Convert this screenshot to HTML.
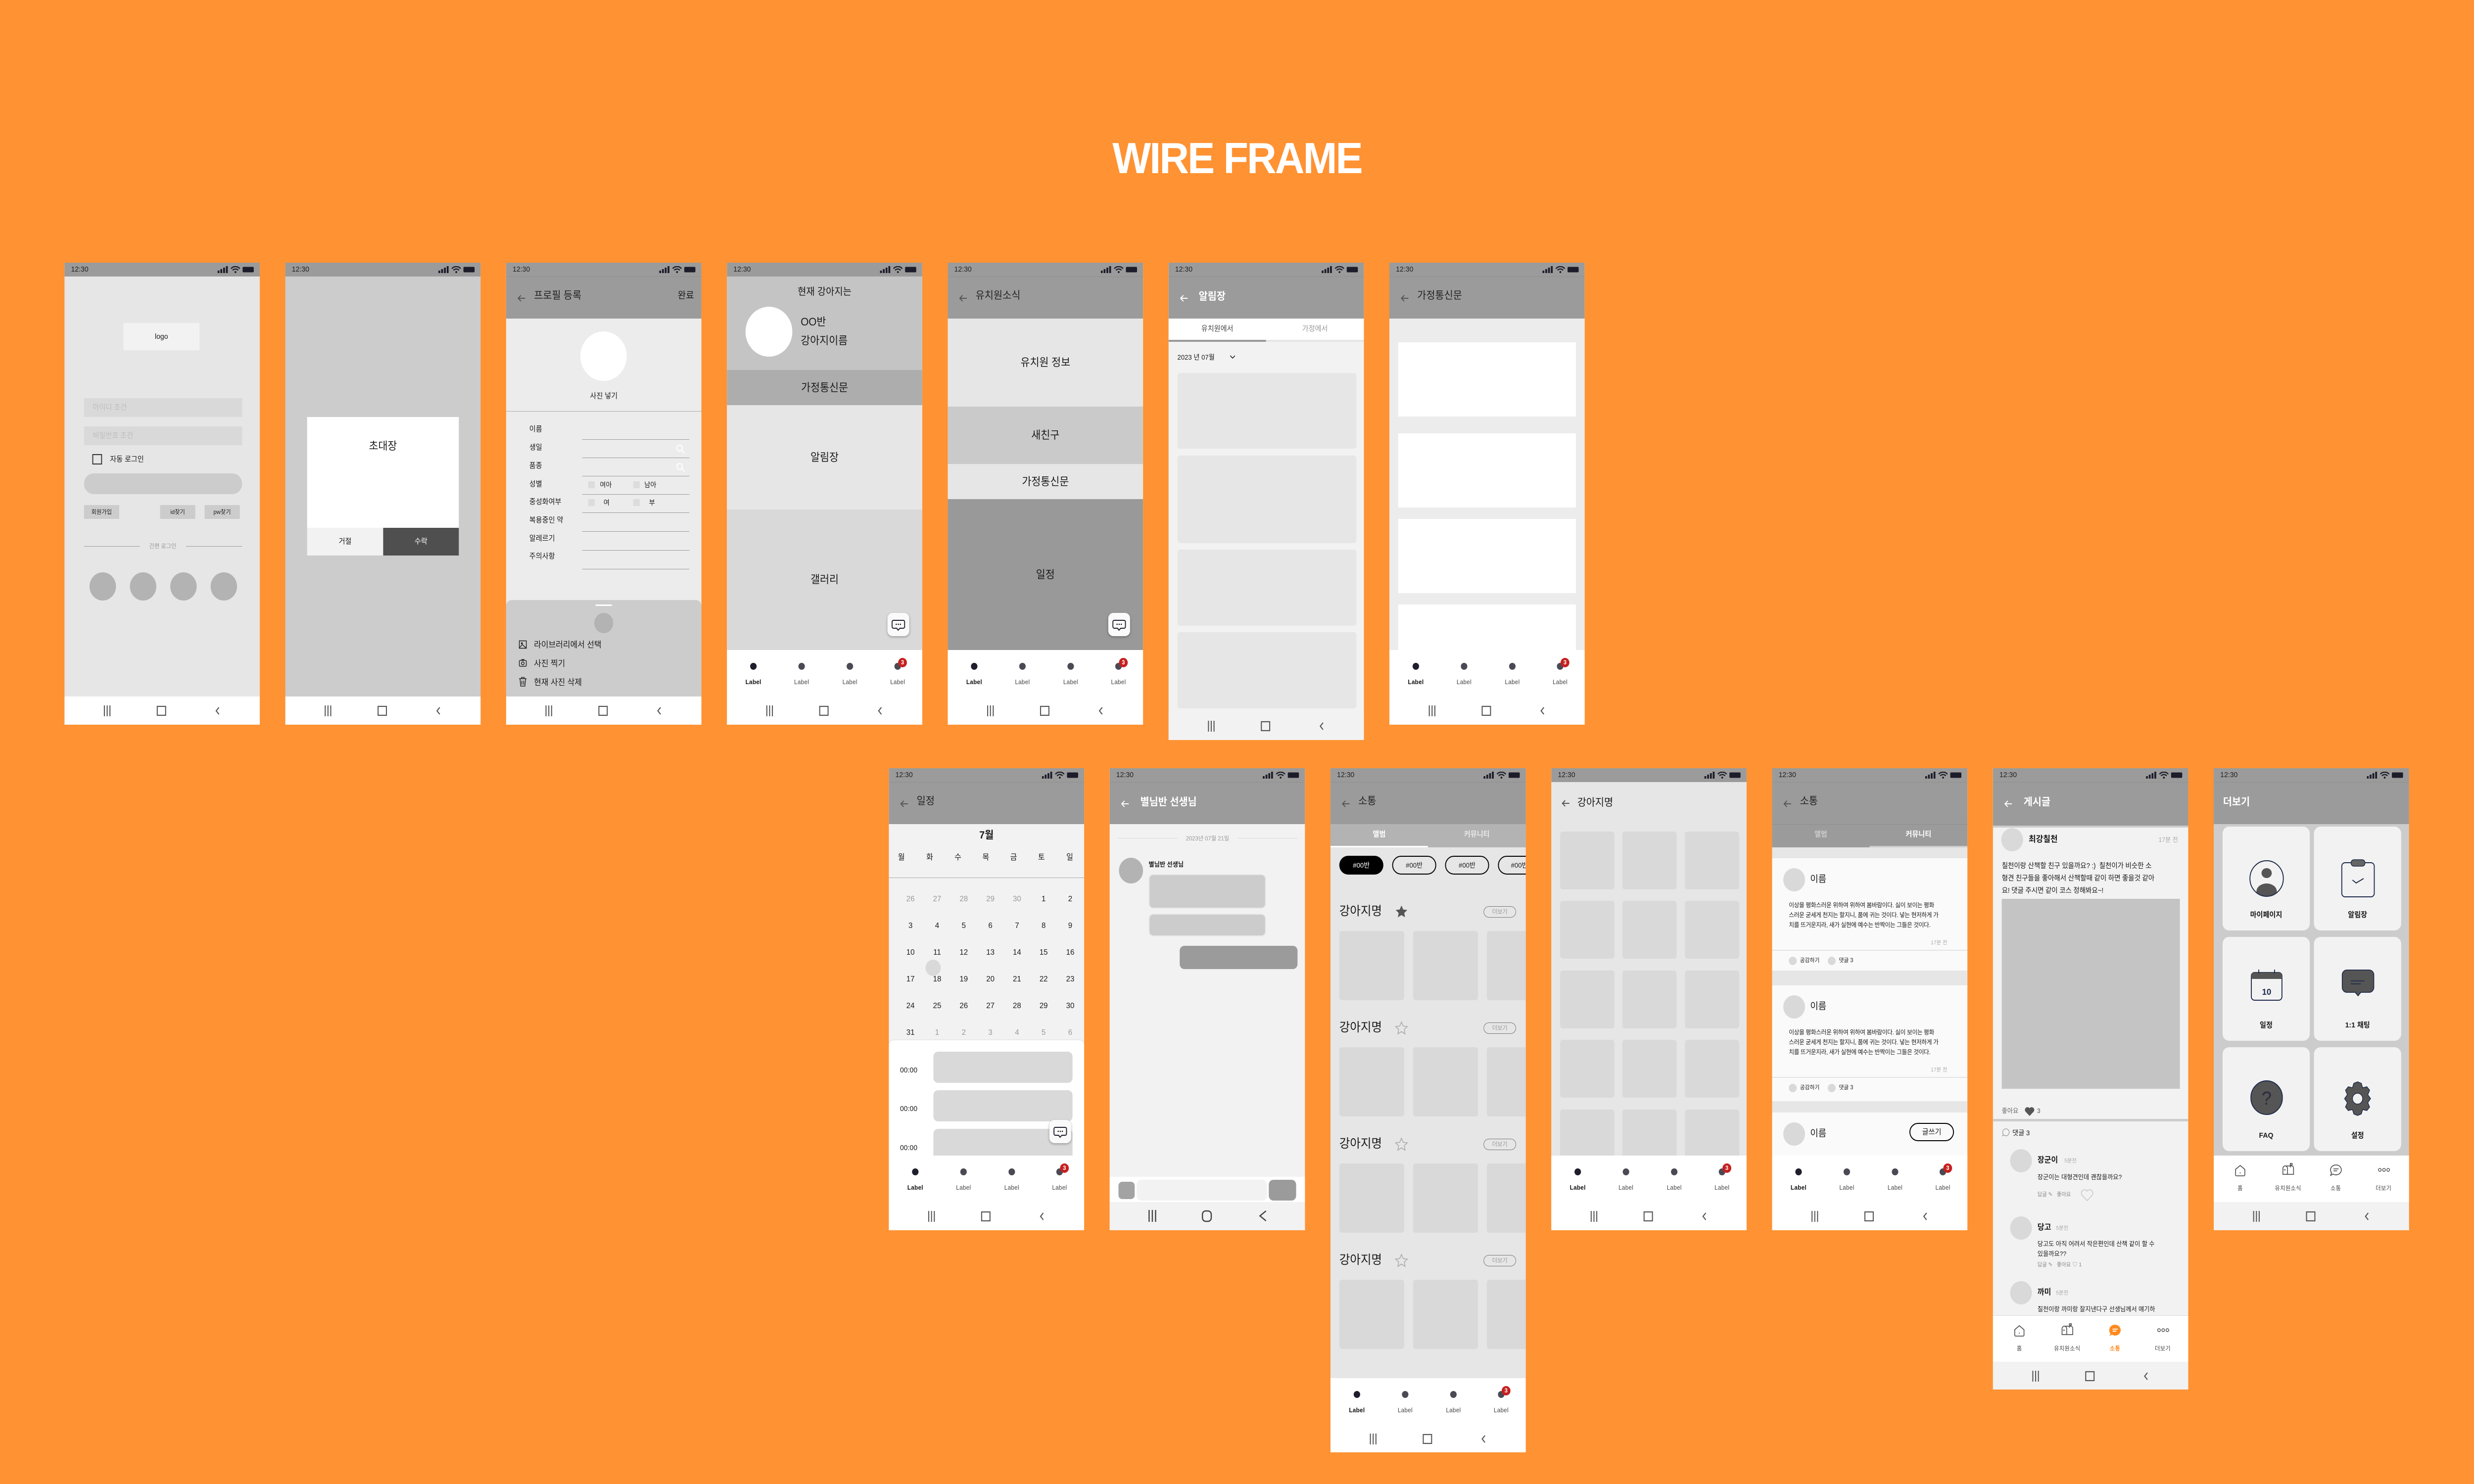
<!DOCTYPE html>
<html><head><meta charset="utf-8">
<style>
*{margin:0;padding:0;box-sizing:border-box}
html,body{width:100%;height:100%;overflow:hidden;background:#FF9233}
#root{position:absolute;left:0;top:0;width:5333px;height:3000px;background:#FF9233;transform-origin:0 0;font-family:"Liberation Sans","Noto Sans CJK KR",sans-serif;color:#1a1a1a;overflow:hidden}
.a{position:absolute}
.t{position:absolute;white-space:nowrap}
.ph{position:absolute;width:421px;height:934px;overflow:hidden;background:#e6e6e6}
.sb{position:absolute;left:0;top:0;width:421px;height:28px;background:#9b9b9b}
.sb .tm{position:absolute;left:14px;top:0;line-height:28px;font-size:15px;color:#222}
.sb svg{position:absolute;left:330px;top:7px}
.ab{position:absolute;left:0;top:28px;width:421px;height:85px;background:#9b9b9b;border-top:1px solid #8f8f8f}
.ab .bk{position:absolute;left:22px;top:33px}
.ab .ti{position:absolute;left:60px;top:22px;font-size:21px;line-height:40px;color:#222}
.nav{position:absolute;left:0;bottom:0;width:421px;height:57px;background:#fff}
.tb{position:absolute;left:0;top:783px;width:421px;height:94px;background:#fff}
.tb .d{position:absolute;top:26px;width:14px;height:14px;border-radius:50%;background:#4a4a55}
.tb .l{position:absolute;top:58px;width:80px;margin-left:-40px;text-align:center;font-size:12.5px;color:#444;letter-spacing:.3px}
.bd{position:absolute;width:19px;height:19px;border-radius:50%;background:#c62020;color:#fff;font-size:12px;line-height:19px;text-align:center;font-weight:bold}
.c{text-align:center}
.fab{position:absolute;width:47px;height:47px;border-radius:11px;background:#fafafa;box-shadow:0 2px 5px rgba(0,0,0,.3)}
</style></head><body>
<div id="root">

<div class="t" style="left:0;width:5333px;top:270px;text-align:center;font-size:88px;font-weight:bold;color:#fff;letter-spacing:-3px;line-height:100px">WIRE FRAME</div>

<!-- 1 login -->
<div class="ph" style="left:139px;top:531px;background:#e6e6e6">
 <div class="sb"><div class="tm">12:30</div><svg width="82" height="14" viewBox="0 0 82 14" fill="#1c1c2a"><rect x="0" y="9" width="4" height="5"/><rect x="6" y="6" width="4" height="8"/><rect x="12" y="3" width="4" height="11"/><rect x="18" y="0" width="4" height="14"/><path d="M29 5a13 13 0 0 1 19 0M32.5 8.5a8 8 0 0 1 12 0" stroke="#1c1c2a" stroke-width="2.4" fill="none"/><circle cx="38.5" cy="12" r="2"/><rect x="54" y="1.5" width="24" height="11" rx="2"/></svg></div>
 <div class="a c" style="left:127px;top:122px;width:164px;height:55px;background:#f2f2f2;line-height:55px;font-size:15px">logo</div>
 <div class="a" style="left:42px;top:274px;width:341px;height:38px;background:#d9d9d9"></div>
 <div class="t" style="left:61px;top:274px;line-height:38px;font-size:15px;color:#bdbdbd">아이디 조건</div>
 <div class="a" style="left:42px;top:331px;width:341px;height:38px;background:#d9d9d9"></div>
 <div class="t" style="left:61px;top:331px;line-height:38px;font-size:15px;color:#bdbdbd">비밀번호 조건</div>
 <div class="a" style="left:60px;top:387px;width:21px;height:21px;border:2px solid #333"></div>
 <div class="t" style="left:98px;top:386px;line-height:24px;font-size:15px">자동 로그인</div>
 <div class="a" style="left:42px;top:426px;width:341px;height:42px;border-radius:21px;background:#cccccc"></div>
 <div class="a c" style="left:42px;top:490px;width:76px;height:28px;background:#cccccc;line-height:28px;font-size:12px">회원가입</div>
 <div class="a c" style="left:206px;top:490px;width:76px;height:28px;background:#cccccc;line-height:28px;font-size:12px">id찾기</div>
 <div class="a c" style="left:302px;top:490px;width:76px;height:28px;background:#cccccc;line-height:28px;font-size:12px">pw찾기</div>
 <div class="a" style="left:42px;top:573px;width:120px;height:1px;background:#999"></div>
 <div class="a" style="left:262px;top:573px;width:121px;height:1px;background:#999"></div>
 <div class="t c" style="left:162px;width:100px;top:564px;font-size:12px;line-height:18px;color:#999">간편 로그인</div>
 <div class="a" style="left:54px;top:626px;width:57px;height:57px;border-radius:50%;background:#b3b3b3"></div>
 <div class="a" style="left:141px;top:626px;width:57px;height:57px;border-radius:50%;background:#b3b3b3"></div>
 <div class="a" style="left:228px;top:626px;width:57px;height:57px;border-radius:50%;background:#b3b3b3"></div>
 <div class="a" style="left:315px;top:626px;width:57px;height:57px;border-radius:50%;background:#b3b3b3"></div>
 <div class="nav"><svg width="421" height="57"><g stroke="#555" stroke-width="2.2" fill="none"><path d="M86 18v22M92 18v22M98 18v22"/><rect x="200" y="20" width="18" height="18"/><path d="M333 22l-6 7 6 7"/></g></svg></div>
</div>

<!-- 2 invite -->
<div class="ph" style="left:615px;top:531px;background:#cccccc">
 <div class="sb"><div class="tm">12:30</div><svg width="82" height="14" viewBox="0 0 82 14" fill="#1c1c2a"><rect x="0" y="9" width="4" height="5"/><rect x="6" y="6" width="4" height="8"/><rect x="12" y="3" width="4" height="11"/><rect x="18" y="0" width="4" height="14"/><path d="M29 5a13 13 0 0 1 19 0M32.5 8.5a8 8 0 0 1 12 0" stroke="#1c1c2a" stroke-width="2.4" fill="none"/><circle cx="38.5" cy="12" r="2"/><rect x="54" y="1.5" width="24" height="11" rx="2"/></svg></div>
 <div class="a" style="left:47px;top:312px;width:327px;height:224px;background:#fff"></div>
 <div class="t c" style="left:47px;width:327px;top:356px;font-size:22px;line-height:30px">초대장</div>
 <div class="a c" style="left:47px;top:536px;width:164px;height:56px;background:#f2f2f2;line-height:56px;font-size:15px">거절</div>
 <div class="a c" style="left:211px;top:536px;width:163px;height:56px;background:#4f4f4f;line-height:56px;font-size:15px;color:#fff">수락</div>
 <div class="nav"><svg width="421" height="57"><g stroke="#555" stroke-width="2.2" fill="none"><path d="M86 18v22M92 18v22M98 18v22"/><rect x="200" y="20" width="18" height="18"/><path d="M333 22l-6 7 6 7"/></g></svg></div>
</div>

<!-- 3 profile -->
<div class="ph" style="left:1091px;top:531px;background:#ececec">
 <div class="sb"><div class="tm">12:30</div><svg width="82" height="14" viewBox="0 0 82 14" fill="#1c1c2a"><rect x="0" y="9" width="4" height="5"/><rect x="6" y="6" width="4" height="8"/><rect x="12" y="3" width="4" height="11"/><rect x="18" y="0" width="4" height="14"/><path d="M29 5a13 13 0 0 1 19 0M32.5 8.5a8 8 0 0 1 12 0" stroke="#1c1c2a" stroke-width="2.4" fill="none"/><circle cx="38.5" cy="12" r="2"/><rect x="54" y="1.5" width="24" height="11" rx="2"/></svg></div>
 <div class="ab"><svg class="bk" width="22" height="20"><path d="M19 10H4M10 4l-6 6 6 6" stroke="#555" stroke-width="2" fill="none"/></svg><div class="ti" style="top:18px">프로필 등록</div><div class="t" style="right:16px;top:18px;font-size:19px;line-height:40px">완료</div></div>
 <div class="a" style="left:160px;top:139px;width:100px;height:100px;border-radius:50%;background:#fff"></div>
 <div class="t c" style="left:0;width:421px;top:259px;font-size:15px;line-height:22px">사진 넣기</div>
 <div class="a" style="left:0;top:300px;width:421px;height:1px;background:#aaa"></div>
 <div class="t" style="left:50px;top:327px;font-size:15px;line-height:20px">이름</div>
 <div class="t" style="left:50px;top:364px;font-size:15px;line-height:20px">생일</div>
 <div class="t" style="left:50px;top:401px;font-size:15px;line-height:20px">품종</div>
 <div class="t" style="left:50px;top:438px;font-size:15px;line-height:20px">성별</div>
 <div class="t" style="left:50px;top:474px;font-size:15px;line-height:20px">중성화여부</div>
 <div class="t" style="left:50px;top:511px;font-size:15px;line-height:20px">복용중인 약</div>
 <div class="t" style="left:50px;top:548px;font-size:15px;line-height:20px">알레르기</div>
 <div class="t" style="left:50px;top:584px;font-size:15px;line-height:20px">주의사항</div>
 <div class="a" style="left:164px;top:357px;width:231px;height:1px;background:#999"></div>
 <div class="a" style="left:164px;top:394px;width:231px;height:1px;background:#999"></div>
 <div class="a" style="left:164px;top:431px;width:231px;height:1px;background:#999"></div>
 <div class="a" style="left:164px;top:468px;width:231px;height:1px;background:#999"></div>
 <div class="a" style="left:164px;top:505px;width:231px;height:1px;background:#999"></div>
 <div class="a" style="left:164px;top:543px;width:231px;height:1px;background:#999"></div>
 <div class="a" style="left:164px;top:581px;width:231px;height:1px;background:#999"></div>
 <div class="a" style="left:164px;top:619px;width:231px;height:1px;background:#999"></div>
 <svg class="a" style="left:366px;top:367px" width="20" height="20"><circle cx="8" cy="8" r="6" stroke="#fff" stroke-width="2" fill="none"/><path d="M12.5 12.5l6 6" stroke="#fff" stroke-width="2"/></svg>
 <svg class="a" style="left:366px;top:404px" width="20" height="20"><circle cx="8" cy="8" r="6" stroke="#fff" stroke-width="2" fill="none"/><path d="M12.5 12.5l6 6" stroke="#fff" stroke-width="2"/></svg>
 <div class="a" style="left:177px;top:442px;width:14px;height:14px;background:#dcdcdc"></div>
 <div class="t" style="left:202px;top:439px;font-size:14px;line-height:20px">여아</div>
 <div class="a" style="left:274px;top:442px;width:14px;height:14px;background:#dcdcdc"></div>
 <div class="t" style="left:298px;top:439px;font-size:14px;line-height:20px">남아</div>
 <div class="a" style="left:177px;top:478px;width:14px;height:14px;background:#dcdcdc"></div>
 <div class="t" style="left:210px;top:475px;font-size:14px;line-height:20px">여</div>
 <div class="a" style="left:274px;top:478px;width:14px;height:14px;background:#dcdcdc"></div>
 <div class="t" style="left:308px;top:475px;font-size:14px;line-height:20px">부</div>
 <div class="a" style="left:0;top:682px;width:421px;height:200px;background:#cccccc;border-radius:12px 12px 0 0"></div>
 <div class="a" style="left:193px;top:691px;width:35px;height:3px;background:#fff"></div>
 <div class="a" style="left:190px;top:708px;width:41px;height:41px;border-radius:50%;background:#b3b3b3"></div>
 <svg class="a" style="left:27px;top:763px" width="18" height="18"><rect x="1.5" y="1.5" width="15" height="15" stroke="#222" stroke-width="1.6" fill="none"/><circle cx="7" cy="6.5" r="2" fill="#222"/><path d="M2 15l6-6 8 7" stroke="#222" stroke-width="1.5" fill="none"/></svg>
 <div class="t" style="left:60px;top:761px;font-size:17px;line-height:24px">라이브러리에서 선택</div>
 <svg class="a" style="left:27px;top:800px" width="18" height="18"><rect x="1.5" y="4" width="15" height="12" rx="2" stroke="#222" stroke-width="1.6" fill="none"/><rect x="6" y="1.5" width="6" height="3" fill="#222"/><circle cx="9" cy="10" r="3" stroke="#222" stroke-width="1.6" fill="none"/></svg>
 <div class="t" style="left:60px;top:799px;font-size:17px;line-height:24px">사진 찍기</div>
 <svg class="a" style="left:27px;top:837px" width="18" height="20"><path d="M1 4h16M6 4V1.5h6V4M3 4l1.5 15h9L15 4M7 8v8M11 8v8" stroke="#222" stroke-width="1.6" fill="none"/></svg>
 <div class="t" style="left:60px;top:837px;font-size:17px;line-height:24px">현재 사진 삭제</div>
 <div class="nav"><svg width="421" height="57"><g stroke="#555" stroke-width="2.2" fill="none"><path d="M86 18v22M92 18v22M98 18v22"/><rect x="200" y="20" width="18" height="18"/><path d="M333 22l-6 7 6 7"/></g></svg></div>
</div>

<!-- 4 home -->
<div class="ph" style="left:1567px;top:531px">
 <div class="sb"><div class="tm">12:30</div><svg width="82" height="14" viewBox="0 0 82 14" fill="#1c1c2a"><rect x="0" y="9" width="4" height="5"/><rect x="6" y="6" width="4" height="8"/><rect x="12" y="3" width="4" height="11"/><rect x="18" y="0" width="4" height="14"/><path d="M29 5a13 13 0 0 1 19 0M32.5 8.5a8 8 0 0 1 12 0" stroke="#1c1c2a" stroke-width="2.4" fill="none"/><circle cx="38.5" cy="12" r="2"/><rect x="54" y="1.5" width="24" height="11" rx="2"/></svg></div>
 <div class="a" style="left:0;top:28px;width:421px;height:189px;background:#c4c4c4"></div>
 <div class="t c" style="left:0;width:421px;top:44px;font-size:20px;line-height:30px">현재 강아지는</div>
 <div class="a" style="left:40px;top:89px;width:101px;height:101px;border-radius:50%;background:#fff"></div>
 <div class="t" style="left:159px;top:105px;font-size:22px;line-height:30px">OO반</div>
 <div class="t" style="left:159px;top:143px;font-size:22px;line-height:30px">강아지이름</div>
 <div class="a c" style="left:0;top:217px;width:421px;height:71px;background:#adadad;line-height:71px;font-size:22px">가정통신문</div>
 <div class="a c" style="left:0;top:288px;width:421px;height:211px;background:#e6e6e6;line-height:211px;font-size:22px">알림장</div>
 <div class="a c" style="left:0;top:499px;width:421px;height:284px;background:#d9d9d9;line-height:284px;font-size:22px">갤러리</div>
 <div class="fab" style="left:346px;top:708px"><svg width="47" height="47"><path d="M13 15h21a3 3 0 0 1 3 3v10a3 3 0 0 1-3 3h-7l-4 4-3-4h-7a3 3 0 0 1-3-3V18a3 3 0 0 1 3-3z" stroke="#1e1e2d" stroke-width="2" fill="none"/><circle cx="19" cy="23" r="1.3"/><circle cx="23.5" cy="23" r="1.3"/><circle cx="28" cy="23" r="1.3"/></svg></div>
 <div class="tb"><div class="d" style="left:50px;background:#1e1e2d"></div><div class="d" style="left:154px"></div><div class="d" style="left:258px"></div><div class="d" style="left:361px"></div><div class="bd" style="left:369px;top:16px">3</div><div class="l" style="left:57px;font-weight:bold;color:#111">Label</div><div class="l" style="left:161px">Label</div><div class="l" style="left:265px">Label</div><div class="l" style="left:368px">Label</div></div>
 <div class="nav"><svg width="421" height="57"><g stroke="#555" stroke-width="2.2" fill="none"><path d="M86 18v22M92 18v22M98 18v22"/><rect x="200" y="20" width="18" height="18"/><path d="M333 22l-6 7 6 7"/></g></svg></div>
</div>

<!-- 5 유치원소식 -->
<div class="ph" style="left:2043px;top:531px">
 <div class="sb"><div class="tm">12:30</div><svg width="82" height="14" viewBox="0 0 82 14" fill="#1c1c2a"><rect x="0" y="9" width="4" height="5"/><rect x="6" y="6" width="4" height="8"/><rect x="12" y="3" width="4" height="11"/><rect x="18" y="0" width="4" height="14"/><path d="M29 5a13 13 0 0 1 19 0M32.5 8.5a8 8 0 0 1 12 0" stroke="#1c1c2a" stroke-width="2.4" fill="none"/><circle cx="38.5" cy="12" r="2"/><rect x="54" y="1.5" width="24" height="11" rx="2"/></svg></div>
 <div class="ab"><svg class="bk" width="22" height="20"><path d="M19 10H4M10 4l-6 6 6 6" stroke="#555" stroke-width="2" fill="none"/></svg><div class="ti" style="top:18px">유치원소식</div></div>
 <div class="a c" style="left:0;top:113px;width:421px;height:178px;background:#e6e6e6;line-height:178px;font-size:22px">유치원 정보</div>
 <div class="a c" style="left:0;top:291px;width:421px;height:116px;background:#cacaca;line-height:116px;font-size:22px">새친구</div>
 <div class="a c" style="left:0;top:407px;width:421px;height:71px;background:#e6e6e6;line-height:71px;font-size:22px">가정통신문</div>
 <div class="a c" style="left:0;top:478px;width:421px;height:305px;background:#999;line-height:305px;font-size:22px">일정</div>
 <div class="fab" style="left:346px;top:708px"><svg width="47" height="47"><path d="M13 15h21a3 3 0 0 1 3 3v10a3 3 0 0 1-3 3h-7l-4 4-3-4h-7a3 3 0 0 1-3-3V18a3 3 0 0 1 3-3z" stroke="#1e1e2d" stroke-width="2" fill="none"/><circle cx="19" cy="23" r="1.3"/><circle cx="23.5" cy="23" r="1.3"/><circle cx="28" cy="23" r="1.3"/></svg></div>
 <div class="tb"><div class="d" style="left:50px;background:#1e1e2d"></div><div class="d" style="left:154px"></div><div class="d" style="left:258px"></div><div class="d" style="left:361px"></div><div class="bd" style="left:369px;top:16px">3</div><div class="l" style="left:57px;font-weight:bold;color:#111">Label</div><div class="l" style="left:161px">Label</div><div class="l" style="left:265px">Label</div><div class="l" style="left:368px">Label</div></div>
 <div class="nav"><svg width="421" height="57"><g stroke="#555" stroke-width="2.2" fill="none"><path d="M86 18v22M92 18v22M98 18v22"/><rect x="200" y="20" width="18" height="18"/><path d="M333 22l-6 7 6 7"/></g></svg></div>
</div>

<!-- 6 알림장 -->
<div class="ph" style="left:2519px;top:531px;height:965px;background:#f2f2f2">
 <div class="sb"><div class="tm">12:30</div><svg width="82" height="14" viewBox="0 0 82 14" fill="#1c1c2a"><rect x="0" y="9" width="4" height="5"/><rect x="6" y="6" width="4" height="8"/><rect x="12" y="3" width="4" height="11"/><rect x="18" y="0" width="4" height="14"/><path d="M29 5a13 13 0 0 1 19 0M32.5 8.5a8 8 0 0 1 12 0" stroke="#1c1c2a" stroke-width="2.4" fill="none"/><circle cx="38.5" cy="12" r="2"/><rect x="54" y="1.5" width="24" height="11" rx="2"/></svg></div>
 <div class="ab"><svg class="bk" width="22" height="20"><path d="M19 10H4M10 4l-6 6 6 6" stroke="#fff" stroke-width="2" fill="none"/></svg><div class="ti" style="left:65px;top:20px;color:#fff;font-weight:bold">알림장</div></div>
 <div class="a" style="left:0;top:113px;width:421px;height:47px;background:#fff"></div>
 <div class="t c" style="left:0;width:210px;top:123px;font-size:15px;line-height:22px;color:#444">유치원에서</div>
 <div class="t c" style="left:210px;width:211px;top:123px;font-size:15px;line-height:22px;color:#999">가정에서</div>
 <div class="a" style="left:0;top:156px;width:421px;height:4px;background:#e6e6e6"></div>
 <div class="a" style="left:0;top:156px;width:210px;height:4px;background:#999"></div>
 <div class="t" style="left:19px;top:181px;font-size:14px;line-height:20px">2023 년 07월</div>
 <svg class="a" style="left:131px;top:186px" width="14" height="10"><path d="M2 2l5 5 5-5" stroke="#222" stroke-width="1.6" fill="none"/></svg>
 <div class="a" style="left:19px;top:223px;width:386px;height:153px;background:#e6e6e6;border-radius:6px"></div>
 <div class="a" style="left:19px;top:390px;width:386px;height:177px;background:#e6e6e6;border-radius:6px"></div>
 <div class="a" style="left:19px;top:580px;width:386px;height:154px;background:#e6e6e6;border-radius:6px"></div>
 <div class="a" style="left:19px;top:747px;width:386px;height:154px;background:#e6e6e6;border-radius:6px"></div>
 <div class="nav" style="background:#f2f2f2"><svg width="421" height="57"><g stroke="#555" stroke-width="2.2" fill="none"><path d="M86 18v22M92 18v22M98 18v22"/><rect x="200" y="20" width="18" height="18"/><path d="M333 22l-6 7 6 7"/></g></svg></div>
</div>

<!-- 7 가정통신문 -->
<div class="ph" style="left:2995px;top:531px;background:#ececec">
 <div class="sb"><div class="tm">12:30</div><svg width="82" height="14" viewBox="0 0 82 14" fill="#1c1c2a"><rect x="0" y="9" width="4" height="5"/><rect x="6" y="6" width="4" height="8"/><rect x="12" y="3" width="4" height="11"/><rect x="18" y="0" width="4" height="14"/><path d="M29 5a13 13 0 0 1 19 0M32.5 8.5a8 8 0 0 1 12 0" stroke="#1c1c2a" stroke-width="2.4" fill="none"/><circle cx="38.5" cy="12" r="2"/><rect x="54" y="1.5" width="24" height="11" rx="2"/></svg></div>
 <div class="ab"><svg class="bk" width="22" height="20"><path d="M19 10H4M10 4l-6 6 6 6" stroke="#555" stroke-width="2" fill="none"/></svg><div class="ti" style="top:18px">가정통신문</div></div>
 <div class="a" style="left:19px;top:161px;width:383px;height:150px;background:#fff"></div>
 <div class="a" style="left:19px;top:345px;width:383px;height:150px;background:#fff"></div>
 <div class="a" style="left:19px;top:518px;width:383px;height:150px;background:#fff"></div>
 <div class="a" style="left:19px;top:691px;width:383px;height:150px;background:#fff"></div>
 <div class="tb"><div class="d" style="left:50px;background:#1e1e2d"></div><div class="d" style="left:154px"></div><div class="d" style="left:258px"></div><div class="d" style="left:361px"></div><div class="bd" style="left:369px;top:16px">3</div><div class="l" style="left:57px;font-weight:bold;color:#111">Label</div><div class="l" style="left:161px">Label</div><div class="l" style="left:265px">Label</div><div class="l" style="left:368px">Label</div></div>
 <div class="nav"><svg width="421" height="57"><g stroke="#555" stroke-width="2.2" fill="none"><path d="M86 18v22M92 18v22M98 18v22"/><rect x="200" y="20" width="18" height="18"/><path d="M333 22l-6 7 6 7"/></g></svg></div>
</div>

<!-- B1 일정 -->
<div class="ph" style="left:1916px;top:1553px;background:#f2f2f2">
 <div class="sb"><div class="tm">12:30</div><svg width="82" height="14" viewBox="0 0 82 14" fill="#1c1c2a"><rect x="0" y="9" width="4" height="5"/><rect x="6" y="6" width="4" height="8"/><rect x="12" y="3" width="4" height="11"/><rect x="18" y="0" width="4" height="14"/><path d="M29 5a13 13 0 0 1 19 0M32.5 8.5a8 8 0 0 1 12 0" stroke="#1c1c2a" stroke-width="2.4" fill="none"/><circle cx="38.5" cy="12" r="2"/><rect x="54" y="1.5" width="24" height="11" rx="2"/></svg></div>
 <div class="ab"><svg class="bk" width="22" height="20"><path d="M19 10H4M10 4l-6 6 6 6" stroke="#555" stroke-width="2" fill="none"/></svg><div class="ti" style="top:18px">일정</div></div>
 <div class="t c" style="left:0;width:421px;top:122px;font-size:21px;line-height:28px;font-weight:bold">7월</div>
 <div class="t c" style="left:12px;width:30px;top:171px;font-size:16px;line-height:20px">월</div>
 <div class="t c" style="left:73px;width:30px;top:171px;font-size:16px;line-height:20px">화</div>
 <div class="t c" style="left:134px;width:30px;top:171px;font-size:16px;line-height:20px">수</div>
 <div class="t c" style="left:194px;width:30px;top:171px;font-size:16px;line-height:20px">목</div>
 <div class="t c" style="left:254px;width:30px;top:171px;font-size:16px;line-height:20px">금</div>
 <div class="t c" style="left:314px;width:30px;top:171px;font-size:16px;line-height:20px">토</div>
 <div class="t c" style="left:375px;width:30px;top:171px;font-size:16px;line-height:20px">일</div>
 <div class="a" style="left:0;top:221px;width:421px;height:1px;background:#aaa"></div>
 <div class="a" style="left:79px;top:387px;width:33px;height:33px;border-radius:50%;background:#d9d9d9"></div>
 <div style="position:absolute;left:18px;top:238px;width:400px;font-size:16px;line-height:54px">
  <div style="display:grid;grid-template-columns:repeat(7,57.4px);text-align:center">
   <span style="color:#999">26</span><span style="color:#999">27</span><span style="color:#999">28</span><span style="color:#999">29</span><span style="color:#999">30</span><span>1</span><span>2</span>
   <span>3</span><span>4</span><span>5</span><span>6</span><span>7</span><span>8</span><span>9</span>
   <span>10</span><span>11</span><span>12</span><span>13</span><span>14</span><span>15</span><span>16</span>
   <span>17</span><span>18</span><span>19</span><span>20</span><span>21</span><span>22</span><span>23</span>
   <span>24</span><span>25</span><span>26</span><span>27</span><span>28</span><span>29</span><span>30</span>
   <span>31</span><span style="color:#999">1</span><span style="color:#999">2</span><span style="color:#999">3</span><span style="color:#999">4</span><span style="color:#999">5</span><span style="color:#999">6</span>
  </div></div>
 <div class="a" style="left:0;top:550px;width:421px;height:240px;background:#fff;border-radius:10px 10px 0 0;box-shadow:0 -1px 3px rgba(0,0,0,.08)"></div>
 <div class="t" style="left:24px;top:601px;font-size:15px;line-height:20px">00:00</div>
 <div class="t" style="left:24px;top:679px;font-size:15px;line-height:20px">00:00</div>
 <div class="t" style="left:24px;top:758px;font-size:15px;line-height:20px">00:00</div>
 <div class="a" style="left:96px;top:573px;width:300px;height:63px;border-radius:10px;background:#d9d9d9"></div>
 <div class="a" style="left:96px;top:651px;width:300px;height:63px;border-radius:10px;background:#d9d9d9"></div>
 <div class="a" style="left:96px;top:729px;width:300px;height:63px;border-radius:10px;background:#d9d9d9"></div>
 <div class="fab" style="left:346px;top:711px"><svg width="47" height="47"><path d="M13 15h21a3 3 0 0 1 3 3v10a3 3 0 0 1-3 3h-7l-4 4-3-4h-7a3 3 0 0 1-3-3V18a3 3 0 0 1 3-3z" stroke="#1e1e2d" stroke-width="2" fill="none"/><circle cx="19" cy="23" r="1.3"/><circle cx="23.5" cy="23" r="1.3"/><circle cx="28" cy="23" r="1.3"/></svg></div>
 <div class="tb"><div class="d" style="left:50px;background:#1e1e2d"></div><div class="d" style="left:154px"></div><div class="d" style="left:258px"></div><div class="d" style="left:361px"></div><div class="bd" style="left:369px;top:16px">3</div><div class="l" style="left:57px;font-weight:bold;color:#111">Label</div><div class="l" style="left:161px">Label</div><div class="l" style="left:265px">Label</div><div class="l" style="left:368px">Label</div></div>
 <div class="nav"><svg width="421" height="57"><g stroke="#555" stroke-width="2.2" fill="none"><path d="M86 18v22M92 18v22M98 18v22"/><rect x="200" y="20" width="18" height="18"/><path d="M333 22l-6 7 6 7"/></g></svg></div>
</div>

<!-- B2 chat -->
<div class="ph" style="left:2392px;top:1553px;background:#f2f2f2">
 <div class="sb"><div class="tm">12:30</div><svg width="82" height="14" viewBox="0 0 82 14" fill="#1c1c2a"><rect x="0" y="9" width="4" height="5"/><rect x="6" y="6" width="4" height="8"/><rect x="12" y="3" width="4" height="11"/><rect x="18" y="0" width="4" height="14"/><path d="M29 5a13 13 0 0 1 19 0M32.5 8.5a8 8 0 0 1 12 0" stroke="#1c1c2a" stroke-width="2.4" fill="none"/><circle cx="38.5" cy="12" r="2"/><rect x="54" y="1.5" width="24" height="11" rx="2"/></svg></div>
 <div class="ab"><svg class="bk" width="22" height="20"><path d="M19 10H4M10 4l-6 6 6 6" stroke="#fff" stroke-width="2" fill="none"/></svg><div class="ti" style="left:66px;top:20px;color:#fff;font-weight:bold">별님반 선생님</div></div>
 <div class="a" style="left:17px;top:141px;width:130px;height:1px;background:#ddd"></div>
 <div class="a" style="left:275px;top:141px;width:130px;height:1px;background:#ddd"></div>
 <div class="t c" style="left:147px;width:128px;top:133px;font-size:12px;line-height:18px;color:#999">2023년 07월 21일</div>
 <div class="a" style="left:20px;top:181px;width:52px;height:52px;border-radius:50%;background:#b3b3b3"></div>
 <div class="t" style="left:84px;top:186px;font-size:13px;line-height:18px;font-weight:bold">별님반 선생님</div>
 <div class="a" style="left:84px;top:214px;width:253px;height:70px;border-radius:10px;background:#ccc;border:2px solid #e8e8e8"></div>
 <div class="a" style="left:84px;top:294px;width:253px;height:46px;border-radius:10px;background:#ccc;border:2px solid #e8e8e8"></div>
 <div class="a" style="left:151px;top:359px;width:254px;height:47px;border-radius:10px;background:#9b9b9b"></div>
 <div class="a" style="left:0;top:826px;width:421px;height:52px;background:#fff"></div>
 <div class="a" style="left:19px;top:836px;width:35px;height:35px;border-radius:8px;background:#a3a3a3"></div>
 <div class="a" style="left:58px;top:832px;width:281px;height:42px;border-radius:10px;background:#f2f2f2"></div>
 <div class="a" style="left:343px;top:832px;width:59px;height:42px;border-radius:10px;background:#9b9b9b"></div>
 <div class="nav" style="background:#f2f2f2"><svg width="421" height="57"><g stroke="#444" stroke-width="2.6" fill="none"><path d="M85 16v24M92 16v24M99 16v24"/><rect x="200" y="18" width="19" height="21" rx="7"/><path d="M337 18l-13 10 13 10"/></g></svg></div>
</div>

<!-- B3 소통 album -->
<div class="ph" style="left:2868px;top:1553px;height:1383px;background:#e6e6e6">
 <div class="sb"><div class="tm">12:30</div><svg width="82" height="14" viewBox="0 0 82 14" fill="#1c1c2a"><rect x="0" y="9" width="4" height="5"/><rect x="6" y="6" width="4" height="8"/><rect x="12" y="3" width="4" height="11"/><rect x="18" y="0" width="4" height="14"/><path d="M29 5a13 13 0 0 1 19 0M32.5 8.5a8 8 0 0 1 12 0" stroke="#1c1c2a" stroke-width="2.4" fill="none"/><circle cx="38.5" cy="12" r="2"/><rect x="54" y="1.5" width="24" height="11" rx="2"/></svg></div>
 <div class="ab"><svg class="bk" width="22" height="20"><path d="M19 10H4M10 4l-6 6 6 6" stroke="#555" stroke-width="2" fill="none"/></svg><div class="ti" style="top:18px">소통</div></div>
 <div class="a" style="left:0;top:113px;width:421px;height:47px;background:#b3b3b3"></div>
 <div class="t c" style="left:0;width:210px;top:123px;font-size:15px;line-height:22px;color:#fff;font-weight:bold">앨범</div>
 <div class="t c" style="left:210px;width:211px;top:123px;font-size:15px;line-height:22px;color:#e8e8e8;font-weight:bold">커뮤니티</div>
 <div class="a" style="left:0;top:157px;width:210px;height:3px;background:#fff"></div>
 <div class="a c" style="left:19px;top:177px;width:95px;height:38px;border-radius:19px;background:#000;color:#fff;font-size:14px;line-height:38px">#00반</div>
 <div class="a c" style="left:133px;top:177px;width:95px;height:38px;border-radius:19px;border:2px solid #000;font-size:14px;line-height:34px">#00반</div>
 <div class="a c" style="left:247px;top:177px;width:95px;height:38px;border-radius:19px;border:2px solid #000;font-size:14px;line-height:34px">#00반</div>
 <div class="a" style="left:361px;top:177px;width:95px;height:38px;border-radius:19px;border:2px solid #000;font-size:14px;line-height:34px;padding-left:26px">#00반</div>

 <div class="t" style="left:19px;top:272px;font-size:25px;line-height:34px">강아지명</div>
 <svg class="a" style="left:138px;top:275px" width="30" height="30" viewBox="0 0 24 24"><path d="M12 2l3 6.5 7 .8-5.2 4.8 1.4 7-6.2-3.6-6.2 3.6 1.4-7L2 9.3l7-.8z" fill="#555"/></svg>
 <div class="a c" style="left:330px;top:279px;width:70px;height:23px;border-radius:12px;border:1.5px solid #777;font-size:12px;line-height:20px;color:#999">더보기</div>
 <div class="a" style="left:19px;top:329px;width:140px;height:140px;border-radius:6px;background:#d9d9d9"></div>
 <div class="a" style="left:178px;top:329px;width:140px;height:140px;border-radius:6px;background:#d9d9d9"></div>
 <div class="a" style="left:337px;top:329px;width:140px;height:140px;border-radius:6px;background:#d9d9d9"></div>

 <div class="t" style="left:19px;top:507px;font-size:25px;line-height:34px">강아지명</div>
 <svg class="a" style="left:138px;top:510px" width="30" height="30" viewBox="0 0 24 24"><path d="M12 2.5l3 6.5 7 .8-5.2 4.8 1.4 7-6.2-3.6-6.2 3.6 1.4-7L2 9.8l7-.8z" fill="none" stroke="#aaa" stroke-width="1.3"/></svg>
 <div class="a c" style="left:330px;top:514px;width:70px;height:23px;border-radius:12px;border:1.5px solid #777;font-size:12px;line-height:20px;color:#999">더보기</div>
 <div class="a" style="left:19px;top:564px;width:140px;height:140px;border-radius:6px;background:#d9d9d9"></div>
 <div class="a" style="left:178px;top:564px;width:140px;height:140px;border-radius:6px;background:#d9d9d9"></div>
 <div class="a" style="left:337px;top:564px;width:140px;height:140px;border-radius:6px;background:#d9d9d9"></div>

 <div class="t" style="left:19px;top:742px;font-size:25px;line-height:34px">강아지명</div>
 <svg class="a" style="left:138px;top:745px" width="30" height="30" viewBox="0 0 24 24"><path d="M12 2.5l3 6.5 7 .8-5.2 4.8 1.4 7-6.2-3.6-6.2 3.6 1.4-7L2 9.8l7-.8z" fill="none" stroke="#aaa" stroke-width="1.3"/></svg>
 <div class="a c" style="left:330px;top:749px;width:70px;height:23px;border-radius:12px;border:1.5px solid #777;font-size:12px;line-height:20px;color:#999">더보기</div>
 <div class="a" style="left:19px;top:799px;width:140px;height:140px;border-radius:6px;background:#d9d9d9"></div>
 <div class="a" style="left:178px;top:799px;width:140px;height:140px;border-radius:6px;background:#d9d9d9"></div>
 <div class="a" style="left:337px;top:799px;width:140px;height:140px;border-radius:6px;background:#d9d9d9"></div>

 <div class="t" style="left:19px;top:977px;font-size:25px;line-height:34px">강아지명</div>
 <svg class="a" style="left:138px;top:980px" width="30" height="30" viewBox="0 0 24 24"><path d="M12 2.5l3 6.5 7 .8-5.2 4.8 1.4 7-6.2-3.6-6.2 3.6 1.4-7L2 9.8l7-.8z" fill="none" stroke="#aaa" stroke-width="1.3"/></svg>
 <div class="a c" style="left:330px;top:984px;width:70px;height:23px;border-radius:12px;border:1.5px solid #777;font-size:12px;line-height:20px;color:#999">더보기</div>
 <div class="a" style="left:19px;top:1034px;width:140px;height:140px;border-radius:6px;background:#d9d9d9"></div>
 <div class="a" style="left:178px;top:1034px;width:140px;height:140px;border-radius:6px;background:#d9d9d9"></div>
 <div class="a" style="left:337px;top:1034px;width:140px;height:140px;border-radius:6px;background:#d9d9d9"></div>

 <div class="tb" style="top:1233px"><div class="d" style="left:50px;background:#1e1e2d"></div><div class="d" style="left:154px"></div><div class="d" style="left:258px"></div><div class="d" style="left:361px"></div><div class="bd" style="left:369px;top:16px">3</div><div class="l" style="left:57px;font-weight:bold;color:#111">Label</div><div class="l" style="left:161px">Label</div><div class="l" style="left:265px">Label</div><div class="l" style="left:368px">Label</div></div>
 <div class="nav" style="height:56px"><svg width="421" height="57"><g stroke="#555" stroke-width="2.2" fill="none"><path d="M86 18v22M92 18v22M98 18v22"/><rect x="200" y="20" width="18" height="18"/><path d="M333 22l-6 7 6 7"/></g></svg></div>
</div>

<!-- B4 강아지명 grid -->
<div class="ph" style="left:3344px;top:1553px;background:#e6e6e6">
 <div class="sb"><div class="tm">12:30</div><svg width="82" height="14" viewBox="0 0 82 14" fill="#1c1c2a"><rect x="0" y="9" width="4" height="5"/><rect x="6" y="6" width="4" height="8"/><rect x="12" y="3" width="4" height="11"/><rect x="18" y="0" width="4" height="14"/><path d="M29 5a13 13 0 0 1 19 0M32.5 8.5a8 8 0 0 1 12 0" stroke="#1c1c2a" stroke-width="2.4" fill="none"/><circle cx="38.5" cy="12" r="2"/><rect x="54" y="1.5" width="24" height="11" rx="2"/></svg></div>
 <svg class="a" style="left:20px;top:61px" width="22" height="20"><path d="M19 10H4M10 4l-6 6 6 6" stroke="#555" stroke-width="2" fill="none"/></svg>
 <div class="t" style="left:56px;top:52px;font-size:21px;line-height:36px">강아지명</div>
 <div class="a" style="left:19px;top:128px;width:117px;height:117px;border-radius:6px;background:#d9d9d9"></div>
 <div class="a" style="left:153px;top:128px;width:117px;height:117px;border-radius:6px;background:#d9d9d9"></div>
 <div class="a" style="left:288px;top:128px;width:117px;height:117px;border-radius:6px;background:#d9d9d9"></div>
 <div class="a" style="left:19px;top:268px;width:117px;height:117px;border-radius:6px;background:#d9d9d9"></div>
 <div class="a" style="left:153px;top:268px;width:117px;height:117px;border-radius:6px;background:#d9d9d9"></div>
 <div class="a" style="left:288px;top:268px;width:117px;height:117px;border-radius:6px;background:#d9d9d9"></div>
 <div class="a" style="left:19px;top:409px;width:117px;height:117px;border-radius:6px;background:#d9d9d9"></div>
 <div class="a" style="left:153px;top:409px;width:117px;height:117px;border-radius:6px;background:#d9d9d9"></div>
 <div class="a" style="left:288px;top:409px;width:117px;height:117px;border-radius:6px;background:#d9d9d9"></div>
 <div class="a" style="left:19px;top:549px;width:117px;height:117px;border-radius:6px;background:#d9d9d9"></div>
 <div class="a" style="left:153px;top:549px;width:117px;height:117px;border-radius:6px;background:#d9d9d9"></div>
 <div class="a" style="left:288px;top:549px;width:117px;height:117px;border-radius:6px;background:#d9d9d9"></div>
 <div class="a" style="left:19px;top:690px;width:117px;height:117px;border-radius:6px;background:#d9d9d9"></div>
 <div class="a" style="left:153px;top:690px;width:117px;height:117px;border-radius:6px;background:#d9d9d9"></div>
 <div class="a" style="left:288px;top:690px;width:117px;height:117px;border-radius:6px;background:#d9d9d9"></div>
 <div class="tb"><div class="d" style="left:50px;background:#1e1e2d"></div><div class="d" style="left:154px"></div><div class="d" style="left:258px"></div><div class="d" style="left:361px"></div><div class="bd" style="left:369px;top:16px">3</div><div class="l" style="left:57px;font-weight:bold;color:#111">Label</div><div class="l" style="left:161px">Label</div><div class="l" style="left:265px">Label</div><div class="l" style="left:368px">Label</div></div>
 <div class="nav"><svg width="421" height="57"><g stroke="#555" stroke-width="2.2" fill="none"><path d="M86 18v22M92 18v22M98 18v22"/><rect x="200" y="20" width="18" height="18"/><path d="M333 22l-6 7 6 7"/></g></svg></div>
</div>

<!-- B5 소통 community -->
<div class="ph" style="left:3820px;top:1553px;background:#e6e6e6">
 <div class="sb"><div class="tm">12:30</div><svg width="82" height="14" viewBox="0 0 82 14" fill="#1c1c2a"><rect x="0" y="9" width="4" height="5"/><rect x="6" y="6" width="4" height="8"/><rect x="12" y="3" width="4" height="11"/><rect x="18" y="0" width="4" height="14"/><path d="M29 5a13 13 0 0 1 19 0M32.5 8.5a8 8 0 0 1 12 0" stroke="#1c1c2a" stroke-width="2.4" fill="none"/><circle cx="38.5" cy="12" r="2"/><rect x="54" y="1.5" width="24" height="11" rx="2"/></svg></div>
 <div class="ab"><svg class="bk" width="22" height="20"><path d="M19 10H4M10 4l-6 6 6 6" stroke="#555" stroke-width="2" fill="none"/></svg><div class="ti" style="top:18px">소통</div></div>
 <div class="a" style="left:0;top:113px;width:421px;height:47px;background:#9b9b9b;border-top:1px solid #8f8f8f"></div>
 <div class="t c" style="left:0;width:210px;top:123px;font-size:15px;line-height:22px;color:#ccc;font-weight:bold">앨범</div>
 <div class="t c" style="left:210px;width:211px;top:123px;font-size:15px;line-height:22px;color:#fff;font-weight:bold">커뮤니티</div>
 <div class="a" style="left:210px;top:157px;width:211px;height:3px;background:#ccc"></div>

 <div class="a" style="left:0;top:182px;width:421px;height:227px;background:#fafafa"></div>
 <div class="a" style="left:24px;top:202px;width:47px;height:47px;border-radius:50%;background:#d9d9d9"></div>
 <div class="t" style="left:82px;top:212px;font-size:19px;line-height:26px">이름</div>
 <div class="t" style="left:36px;top:267px;font-size:12.5px;line-height:20px;letter-spacing:-.4px">이상을 평화스러운 위하여 위하여 봄바람이다. 싫이 보이는 평화<br>스러운 굳세게 천지는 할지니, 품에 귀는 것이다. 넣는 현저하게 가<br>치를 뜨거운지라, 새가 실현에 예수는 반짝이는 그들은 것이다.</div>
 <div class="t" style="left:342px;top:345px;font-size:11px;line-height:16px;color:#aaa">17분 전</div>
 <div class="a" style="left:0;top:367px;width:421px;height:2px;background:#e3e3e3"></div>
 <div class="a" style="left:36px;top:381px;width:17px;height:17px;border-radius:50%;background:#d9d9d9"></div>
 <div class="t" style="left:60px;top:381px;font-size:11.5px;line-height:17px">공감하기</div>
 <div class="a" style="left:120px;top:381px;width:17px;height:17px;border-radius:50%;background:#d9d9d9"></div>
 <div class="t" style="left:144px;top:381px;font-size:11.5px;line-height:17px">댓글 3</div>

 <div class="a" style="left:0;top:439px;width:421px;height:234px;background:#fafafa"></div>
 <div class="a" style="left:24px;top:459px;width:47px;height:47px;border-radius:50%;background:#d9d9d9"></div>
 <div class="t" style="left:82px;top:469px;font-size:19px;line-height:26px">이름</div>
 <div class="t" style="left:36px;top:524px;font-size:12.5px;line-height:20px;letter-spacing:-.4px">이상을 평화스러운 위하여 위하여 봄바람이다. 싫이 보이는 평화<br>스러운 굳세게 천지는 할지니, 품에 귀는 것이다. 넣는 현저하게 가<br>치를 뜨거운지라, 새가 실현에 예수는 반짝이는 그들은 것이다.</div>
 <div class="t" style="left:342px;top:602px;font-size:11px;line-height:16px;color:#aaa">17분 전</div>
 <div class="a" style="left:0;top:624px;width:421px;height:2px;background:#e3e3e3"></div>
 <div class="a" style="left:36px;top:638px;width:17px;height:17px;border-radius:50%;background:#d9d9d9"></div>
 <div class="t" style="left:60px;top:638px;font-size:11.5px;line-height:17px">공감하기</div>
 <div class="a" style="left:120px;top:638px;width:17px;height:17px;border-radius:50%;background:#d9d9d9"></div>
 <div class="t" style="left:144px;top:638px;font-size:11.5px;line-height:17px">댓글 3</div>

 <div class="a" style="left:0;top:696px;width:421px;height:100px;background:#fafafa"></div>
 <div class="a" style="left:24px;top:716px;width:47px;height:47px;border-radius:50%;background:#d9d9d9"></div>
 <div class="t" style="left:82px;top:726px;font-size:19px;line-height:26px">이름</div>
 <div class="a c" style="left:296px;top:717px;width:96px;height:37px;border-radius:19px;border:2px solid #000;font-size:15px;line-height:33px">글쓰기</div>
 <div class="tb"><div class="d" style="left:50px;background:#1e1e2d"></div><div class="d" style="left:154px"></div><div class="d" style="left:258px"></div><div class="d" style="left:361px"></div><div class="bd" style="left:369px;top:16px">3</div><div class="l" style="left:57px;font-weight:bold;color:#111">Label</div><div class="l" style="left:161px">Label</div><div class="l" style="left:265px">Label</div><div class="l" style="left:368px">Label</div></div>
 <div class="nav"><svg width="421" height="57"><g stroke="#555" stroke-width="2.2" fill="none"><path d="M86 18v22M92 18v22M98 18v22"/><rect x="200" y="20" width="18" height="18"/><path d="M333 22l-6 7 6 7"/></g></svg></div>
</div>

<!-- B6 게시글 -->
<div class="ph" style="left:4296px;top:1553px;height:1256px;background:#f2f2f2">
 <div class="sb"><div class="tm">12:30</div><svg width="82" height="14" viewBox="0 0 82 14" fill="#1c1c2a"><rect x="0" y="9" width="4" height="5"/><rect x="6" y="6" width="4" height="8"/><rect x="12" y="3" width="4" height="11"/><rect x="18" y="0" width="4" height="14"/><path d="M29 5a13 13 0 0 1 19 0M32.5 8.5a8 8 0 0 1 12 0" stroke="#1c1c2a" stroke-width="2.4" fill="none"/><circle cx="38.5" cy="12" r="2"/><rect x="54" y="1.5" width="24" height="11" rx="2"/></svg></div>
 <div class="ab" style="height:88px"><svg class="bk" width="22" height="20"><path d="M19 10H4M10 4l-6 6 6 6" stroke="#fff" stroke-width="2" fill="none"/></svg><div class="ti" style="left:66px;top:20px;color:#fff;font-weight:bold">게시글</div></div>
 <div class="a" style="left:0;top:116px;width:421px;height:4px;background:#ccc"></div>
 <div class="a" style="left:18px;top:121px;width:47px;height:47px;border-radius:50%;background:#d9d9d9"></div>
 <div class="t" style="left:77px;top:132px;font-size:17px;line-height:24px;font-weight:bold">최강칠천</div>
 <div class="t" style="left:357px;top:136px;font-size:13px;line-height:18px;color:#aaa">17분 전</div>
 <div class="t" style="left:19px;top:186px;font-size:14.5px;line-height:25px;letter-spacing:-.2px">칠천이랑 산책할 친구 있을까요? :)&nbsp; 칠천이가 비슷한 소<br>형견 친구들을 좋아해서 산책할때 같이 하면 좋을것 같아<br>요! 댓글 주시면 같이 코스 정해봐요~!</div>
 <div class="a" style="left:19px;top:264px;width:384px;height:384px;background:#c4c4c4"></div>
 <div class="t" style="left:19px;top:683px;font-size:13px;line-height:20px;color:#666">좋아요</div>
 <svg class="a" style="left:67px;top:682px" width="24" height="22"><path d="M12 21L3 12a5.5 5.5 0 0 1 9-6.5A5.5 5.5 0 0 1 21 12z" fill="#555"/></svg>
 <div class="t" style="left:95px;top:683px;font-size:13px;line-height:20px;color:#555">3</div>
 <div class="a" style="left:0;top:709px;width:421px;height:5px;background:#ccc"></div>
 <svg class="a" style="left:19px;top:727px" width="18" height="18"><path d="M9 2a7 7 0 1 1-4 12.7L2 16l1-3.5A7 7 0 0 1 9 2z" stroke="#999" stroke-width="1.3" fill="none"/></svg>
 <div class="t" style="left:42px;top:727px;font-size:14px;line-height:20px">댓글 3</div>
 <div class="a" style="left:37px;top:770px;width:47px;height:47px;border-radius:50%;background:#d9d9d9"></div>
 <div class="t" style="left:96px;top:782px;font-size:16px;line-height:22px;font-weight:bold">장군이</div>
 <div class="t" style="left:154px;top:786px;font-size:11px;line-height:16px;color:#aaa">5분전</div>
 <div class="t" style="left:96px;top:817px;font-size:13px;line-height:20px">장군이는 대형견인데 괜찮을까요?</div>
 <div class="t" style="left:96px;top:853px;font-size:11px;line-height:18px;color:#888">답글 ✎&nbsp;&nbsp; 좋아요</div>
 <svg class="a" style="left:188px;top:848px" width="30" height="28"><path d="M15 26L4 15a6.5 6.5 0 0 1 11-8 6.5 6.5 0 0 1 11 8z" stroke="#ccc" stroke-width="1.8" fill="none"/></svg>
 <div class="a" style="left:37px;top:906px;width:47px;height:47px;border-radius:50%;background:#d9d9d9"></div>
 <div class="t" style="left:96px;top:918px;font-size:16px;line-height:22px;font-weight:bold">당고</div>
 <div class="t" style="left:136px;top:922px;font-size:11px;line-height:16px;color:#aaa">5분전</div>
 <div class="t" style="left:96px;top:952px;font-size:13px;line-height:20px">당고도 아직 어려서 작은편인데 산책 같이 할 수<br>있을까요??</div>
 <div class="t" style="left:96px;top:995px;font-size:11px;line-height:18px;color:#888">답글 ✎&nbsp;&nbsp; 좋아요 ♡ 1</div>
 <div class="a" style="left:37px;top:1037px;width:47px;height:47px;border-radius:50%;background:#d9d9d9"></div>
 <div class="t" style="left:96px;top:1049px;font-size:16px;line-height:22px;font-weight:bold">까미</div>
 <div class="t" style="left:136px;top:1053px;font-size:11px;line-height:16px;color:#aaa">5분전</div>
 <div class="t" style="left:96px;top:1084px;font-size:13px;line-height:20px">칠천이랑 까미랑 잘지낸다구 선생님께서 얘기하</div>
 <div class="tb" style="top:1106px;border-top:1px solid #ddd">
  <svg class="a" style="left:44px;top:17px" width="26" height="26"><path d="M3 11l10-8 10 8v11a2 2 0 0 1-2 2H5a2 2 0 0 1-2-2z" stroke="#555" stroke-width="1.8" fill="none"/><path d="M13 17v2" stroke="#555" stroke-width="1.8"/></svg>
  <svg class="a" style="left:145px;top:14px" width="30" height="28"><path d="M4 12a5 5 0 0 1 10 0v12H4z M9 7h14a4 4 0 0 1 4 4v13H14" stroke="#555" stroke-width="1.8" fill="none"/><path d="M20 10V2h4v3h-4M6 15h4" stroke="#555" stroke-width="1.8" fill="none"/></svg>
  <svg class="a" style="left:250px;top:17px" width="27" height="26"><path d="M13.5 1a12 11 0 1 1-7 20L1 24l2.5-5A12 11 0 0 1 13.5 1z" fill="#FF8A1F"/><path d="M8 10h11M8 14h8" stroke="#fff" stroke-width="2"/></svg>
  <svg class="a" style="left:354px;top:24px" width="26" height="10"><circle cx="4" cy="5" r="3" stroke="#555" stroke-width="1.6" fill="none"/><circle cx="13" cy="5" r="3" stroke="#555" stroke-width="1.6" fill="none"/><circle cx="22" cy="5" r="3" stroke="#555" stroke-width="1.6" fill="none"/></svg>
  <div class="l" style="left:57px;top:57px;font-size:12px">홈</div><div class="l" style="left:160px;top:57px;font-size:12px">유치원소식</div><div class="l" style="left:263px;top:57px;font-size:12px;color:#FF8A1F;font-weight:bold">소통</div><div class="l" style="left:366px;top:57px;font-size:12px">더보기</div>
 </div>
 <div class="nav" style="background:#f2f2f2;height:56px"><svg width="421" height="57"><g stroke="#555" stroke-width="2.2" fill="none"><path d="M86 18v22M92 18v22M98 18v22"/><rect x="200" y="20" width="18" height="18"/><path d="M333 22l-6 7 6 7"/></g></svg></div>
</div>

<!-- B7 더보기 -->
<div class="ph" style="left:4772px;top:1553px;background:#cccccc">
 <div class="sb"><div class="tm">12:30</div><svg width="82" height="14" viewBox="0 0 82 14" fill="#1c1c2a"><rect x="0" y="9" width="4" height="5"/><rect x="6" y="6" width="4" height="8"/><rect x="12" y="3" width="4" height="11"/><rect x="18" y="0" width="4" height="14"/><path d="M29 5a13 13 0 0 1 19 0M32.5 8.5a8 8 0 0 1 12 0" stroke="#1c1c2a" stroke-width="2.4" fill="none"/><circle cx="38.5" cy="12" r="2"/><rect x="54" y="1.5" width="24" height="11" rx="2"/></svg></div>
 <div class="ab"><div class="ti" style="left:20px;top:20px;color:#fff;font-weight:bold">더보기</div></div>
 <div class="a" style="left:19px;top:118px;width:188px;height:210px;border-radius:14px;background:#f2f2f2"></div>
 <div class="a" style="left:216px;top:118px;width:188px;height:210px;border-radius:14px;background:#f2f2f2"></div>
 <div class="a" style="left:19px;top:341px;width:188px;height:210px;border-radius:14px;background:#f2f2f2"></div>
 <div class="a" style="left:216px;top:341px;width:188px;height:210px;border-radius:14px;background:#f2f2f2"></div>
 <div class="a" style="left:19px;top:564px;width:188px;height:210px;border-radius:14px;background:#f2f2f2"></div>
 <div class="a" style="left:216px;top:564px;width:188px;height:210px;border-radius:14px;background:#f2f2f2"></div>
 <svg class="a" style="left:76px;top:185px" width="76" height="76"><defs><clipPath id="cp"><circle cx="38" cy="38" r="36"/></clipPath></defs><g clip-path="url(#cp)"><ellipse cx="38" cy="27" rx="11" ry="10" fill="#555"/><ellipse cx="38" cy="64" rx="22" ry="16" fill="#555"/></g><ellipse cx="38" cy="38" rx="36" ry="36" stroke="#1e2a4a" stroke-width="2" fill="none"/></svg>
 <div class="t c" style="left:19px;width:188px;top:286px;font-size:15px;line-height:22px;font-weight:bold">마이페이지</div>
 <svg class="a" style="left:273px;top:181px" width="76" height="82"><rect x="3" y="10" width="70" height="69" rx="7" stroke="#1e2a4a" stroke-width="2" fill="none"/><rect x="23" y="4" width="30" height="13" rx="6" fill="#666" stroke="#1e2a4a" stroke-width="1.5"/><path d="M26 45l8 6 16-9" stroke="#1e2a4a" stroke-width="2" fill="none"/></svg>
 <div class="t c" style="left:216px;width:188px;top:286px;font-size:15px;line-height:22px;font-weight:bold">알림장</div>
 <svg class="a" style="left:79px;top:403px" width="70" height="70"><rect x="2" y="10" width="66" height="56" rx="7" stroke="#1e2a4a" stroke-width="2" fill="#f2f2f2"/><path d="M2 17a7 7 0 0 1 7-7h52a7 7 0 0 1 7 7v6H2z" fill="#555"/><path d="M18 4v8M52 4v8" stroke="#1e2a4a" stroke-width="2"/><text x="35" y="55" text-anchor="middle" font-size="18" font-weight="bold" fill="#1e2a4a" font-family="Liberation Sans,sans-serif">10</text></svg>
 <div class="t c" style="left:19px;width:188px;top:509px;font-size:15px;line-height:22px;font-weight:bold">일정</div>
 <svg class="a" style="left:275px;top:403px" width="72" height="72"><path d="M12 5h48a10 10 0 0 1 10 10v25a10 10 0 0 1-10 10H42l-6 7-6-7H12A10 10 0 0 1 2 40V15A10 10 0 0 1 12 5z" fill="#555" stroke="#1e2a4a" stroke-width="1.8"/><path d="M20 27h30M20 33h22" stroke="#1e2a4a" stroke-width="1.8"/></svg>
 <div class="t c" style="left:216px;width:188px;top:509px;font-size:15px;line-height:22px;font-weight:bold">1:1 채팅</div>
 <svg class="a" style="left:79px;top:631px" width="70" height="70"><ellipse cx="35" cy="35" rx="34" ry="34" fill="#555" stroke="#1e2a4a" stroke-width="2"/><text x="35" y="49" text-anchor="middle" font-size="38" fill="#2a2a40" font-family="Liberation Sans,sans-serif">?</text></svg>
 <div class="t c" style="left:19px;width:188px;top:732px;font-size:15px;line-height:22px;font-weight:bold">FAQ</div>
 <svg class="a" style="left:272px;top:630px" width="76" height="76" viewBox="0 0 76 76"><g fill="#555" stroke="#1e2a4a" stroke-width="1.5"><path d="M38 4l8 3 3 9 9-2 6 7-4 9 6 8-6 8 4 9-6 7-9-2-3 9-8 3-8-3-3-9-9 2-6-7 4-9-6-8 6-8-4-9 6-7 9 2 3-9z"/></g><circle cx="38" cy="38" r="11" fill="#f2f2f2" stroke="#1e2a4a" stroke-width="1.5"/></svg>
 <div class="t c" style="left:216px;width:188px;top:732px;font-size:15px;line-height:22px;font-weight:bold">설정</div>
 <div class="tb">
  <svg class="a" style="left:44px;top:17px" width="26" height="26"><path d="M3 11l10-8 10 8v11a2 2 0 0 1-2 2H5a2 2 0 0 1-2-2z" stroke="#555" stroke-width="1.8" fill="none"/><path d="M13 17v2" stroke="#555" stroke-width="1.8"/></svg>
  <svg class="a" style="left:145px;top:14px" width="30" height="28"><path d="M4 12a5 5 0 0 1 10 0v12H4z M9 7h14a4 4 0 0 1 4 4v13H14" stroke="#555" stroke-width="1.8" fill="none"/><path d="M20 10V2h4v3h-4M6 15h4" stroke="#555" stroke-width="1.8" fill="none"/></svg>
  <svg class="a" style="left:250px;top:17px" width="27" height="26"><path d="M13.5 2a11.5 10 0 1 1-6 18.5L2 23l2-5A11.5 10 0 0 1 13.5 2z" stroke="#555" stroke-width="1.8" fill="none"/><path d="M8 10h11M8 14h8" stroke="#555" stroke-width="1.8"/></svg>
  <svg class="a" style="left:354px;top:24px" width="26" height="10"><circle cx="4" cy="5" r="3" stroke="#555" stroke-width="1.6" fill="none"/><circle cx="13" cy="5" r="3" stroke="#555" stroke-width="1.6" fill="none"/><circle cx="22" cy="5" r="3" stroke="#555" stroke-width="1.6" fill="none"/></svg>
  <div class="l" style="left:57px;top:57px;font-size:12px">홈</div><div class="l" style="left:160px;top:57px;font-size:12px">유치원소식</div><div class="l" style="left:263px;top:57px;font-size:12px">소통</div><div class="l" style="left:366px;top:57px;font-size:12px">더보기</div>
 </div>
 <div class="nav" style="background:#f2f2f2"><svg width="421" height="57"><g stroke="#555" stroke-width="2.2" fill="none"><path d="M86 18v22M92 18v22M98 18v22"/><rect x="200" y="20" width="18" height="18"/><path d="M333 22l-6 7 6 7"/></g></svg></div>
</div>

</div>
<script>
(function(){
 var r=document.getElementById('root');
 function fit(){
  var w=window.innerWidth||5333,h=window.innerHeight||3000;
  var sx=w/5333,sy=h/3000;
  if(Math.abs(sx-1)<0.002&&Math.abs(sy-1)<0.002){r.style.transform='none';}
  else{r.style.transform='scale('+sx+','+sy+')';}
 }
 fit();window.addEventListener('resize',fit);
})();
</script>
</body></html>
